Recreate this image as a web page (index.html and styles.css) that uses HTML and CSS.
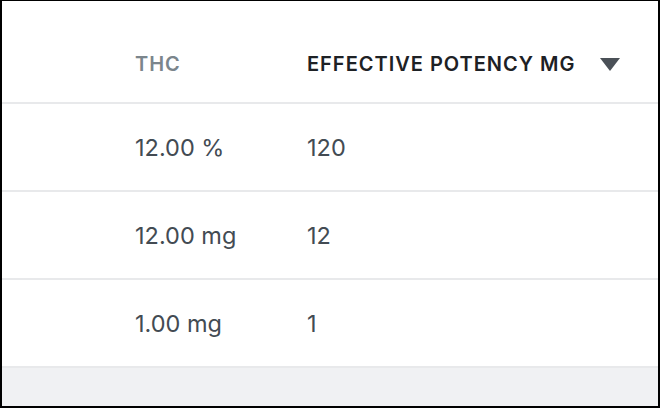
FILE: index.html
```html
<!DOCTYPE html>
<html>
<head>
<meta charset="utf-8">
<link rel="stylesheet" href="styles.css">
</head>
<body>
<div class="frame">
  <div class="table">
    <div class="row head">
      <div class="cell"></div>
      <div class="cell th muted">THC</div>
      <div class="cell th strong">EFFECTIVE POTENCY MG
        <svg class="sort" width="20" height="13" viewBox="0 0 20 13"><path d="M0 0H20L10 13Z" fill="#4a5057"/></svg>
      </div>
    </div>
    <div class="row">
      <div class="cell"></div>
      <div class="cell td">12.00 %</div>
      <div class="cell td">120</div>
    </div>
    <div class="row">
      <div class="cell"></div>
      <div class="cell td">12.00 mg</div>
      <div class="cell td">12</div>
    </div>
    <div class="row">
      <div class="cell"></div>
      <div class="cell td">1.00 mg</div>
      <div class="cell td">1</div>
    </div>
  </div>
  <div class="footer"></div>
</div>
</body>
</html>
```
FILE: styles.css
```css
html, body {
  margin: 0;
  padding: 0;
  background: #fff;
}
.frame {
  box-sizing: border-box;
  width: 660px;
  height: 408px;
  border: 2px solid #000;
  border-top-width: 1px;
  display: flex;
  flex-direction: column;
  font-family: Inter, "Noto Sans", sans-serif;
  overflow: hidden;
}
.table {
  display: flex;
  flex-direction: column;
}
.row {
  display: grid;
  grid-template-columns: 117px 172px 1fr;
  height: 88px;
  box-sizing: border-box;
  border-bottom: 2px solid #e8e9eb;
  align-items: center;
}
.row.head {
  height: 103px;
  align-items: start;
  padding-top: 51px;
}
.cell {
  padding-left: 16px;
}
.th {
  font-size: 20px;
  line-height: 24px;
  font-weight: 600;
  letter-spacing: 1px;
  display: flex;
  align-items: center;
  white-space: nowrap;
}
.muted { color: #7b858c; }
.strong { color: #1d2125; }
.sort {
  margin-left: 24px;
  flex: none;
}
.td {
  font-size: 23.5px;
  line-height: 28px;
  color: #434b53;
  padding-top: 1px;
}
.footer {
  flex: 1;
  background: #f0f1f3;
}
```
